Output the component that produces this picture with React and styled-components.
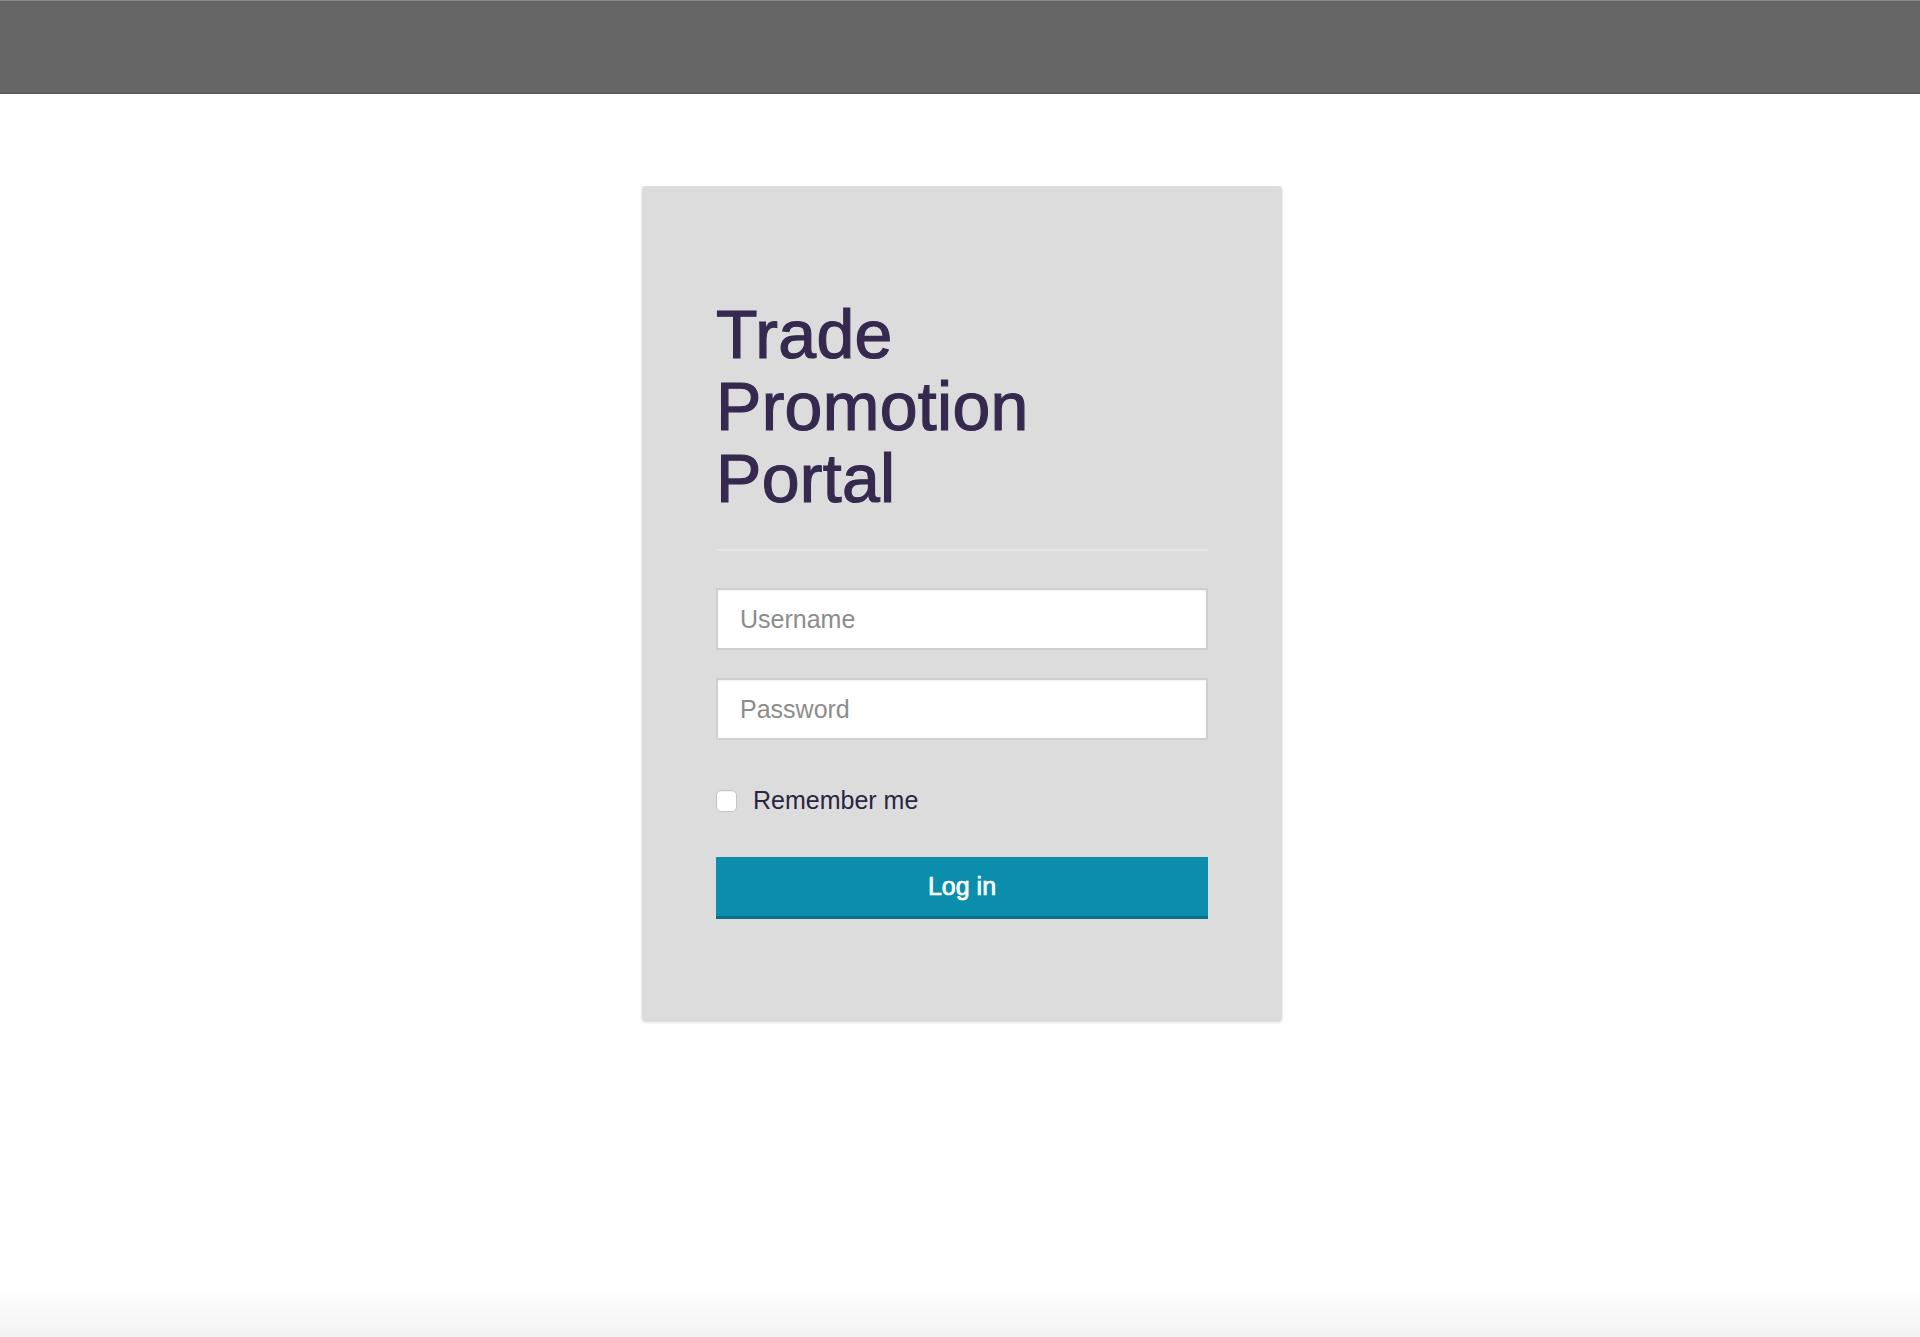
import React from "react";
import styled, { createGlobalStyle } from "styled-components";

const GlobalStyle = createGlobalStyle`
  html, body {
    margin: 0;
    padding: 0;
    background: #fff;
  }
  body {
    font-family: "Liberation Sans", Arial, Helvetica, sans-serif;
  }
  * {
    box-sizing: border-box;
  }
`;

const Page = styled.div`
  display: flex;
  flex-direction: column;
  min-height: 100vh;
`;

const TopBar = styled.header`
  height: 94px;
  background: #666666;
  border-top: 1px solid #8a8a8a;
  border-bottom: 2px solid #5c5c5c;
`;

const Main = styled.main`
  flex: 1;
  display: flex;
  justify-content: center;
  padding-top: 92px;
`;

const Card = styled.section`
  width: 640px;
  height: 834px;
  margin-left: 4px;
  background: #dcdcdc;
  border-radius: 3px;
  box-shadow: 0 2px 3px rgba(0, 0, 0, 0.18);
  padding: 112px 74px 0;
  display: flex;
  flex-direction: column;
`;

const Title = styled.h1`
  margin: 0;
  font-size: 68px;
  line-height: 72px;
  font-weight: 400;
  color: #36294f;
  -webkit-text-stroke: 1.2px #36294f;
  letter-spacing: 0.3px;
`;

const Divider = styled.hr`
  margin: 35px 0 37px;
  border: 0;
  border-top: 2px solid #e6e6e6;
`;

const Input = styled.input`
  display: block;
  width: 100%;
  height: 62px;
  margin-bottom: ${(p) => p.$gap || 0}px;
  padding: 0 22px;
  border: 2px solid #cfcfcf;
  border-radius: 0;
  background: #fff;
  box-shadow: inset 0 1px 2px rgba(0, 0, 0, 0.06);
  font-family: inherit;
  font-size: 25px;
  color: #333;
  outline: none;
  &::placeholder {
    color: #8c8c8c;
  }
`;

const CheckRow = styled.label`
  display: flex;
  align-items: center;
  gap: 16px;
  margin: 46px 0 42px;
  font-size: 25px;
  color: #2b2540;
  cursor: pointer;
`;

const Check = styled.input.attrs({ type: "checkbox" })`
  appearance: none;
  margin: 0;
  width: 21px;
  height: 22px;
  background: #fff;
  border: 1px solid #c4c4c4;
  border-radius: 5px;
  box-shadow: inset 0 1px 1px rgba(0, 0, 0, 0.06);
`;

const LoginButton = styled.button`
  width: 100%;
  height: 62px;
  border: 0;
  border-bottom: 3px solid #09708a;
  background: #0b8eab;
  color: #fff;
  font-family: inherit;
  font-size: 25px;
  font-weight: 400;
  -webkit-text-stroke: 0.7px #fff;
  cursor: pointer;
`;

const Footer = styled.footer`
  height: 47px;
  background: linear-gradient(#ffffff, #f2f2f2);
`;

export default function App() {
  return (
    <Page>
      <GlobalStyle />
      <TopBar />
      <Main>
        <Card>
          <Title>
            Trade
            <br />
            Promotion
            <br />
            Portal
          </Title>
          <Divider />
          <Input type="text" placeholder="Username" $gap={28} />
          <Input type="password" placeholder="Password" />
          <CheckRow>
            <Check />
            Remember me
          </CheckRow>
          <LoginButton type="button">Log in</LoginButton>
        </Card>
      </Main>
      <Footer />
    </Page>
  );
}
